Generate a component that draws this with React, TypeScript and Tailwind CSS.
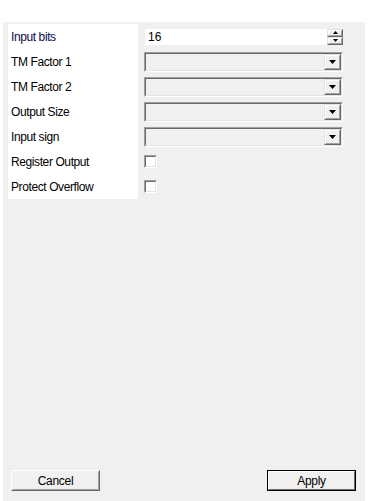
import React from "react";

const rows = [
  { label: "Input bits", kind: "spin" },
  { label: "TM Factor 1", kind: "combo" },
  { label: "TM Factor 2", kind: "combo" },
  { label: "Output Size", kind: "combo" },
  { label: "Input sign", kind: "combo" },
  { label: "Register Output", kind: "check" },
  { label: "Protect Overflow", kind: "check" },
];

function Arrow({ up, small }: { up?: boolean; small?: boolean }) {
  if (small) {
    return (
      <svg width="5" height="3" viewBox="0 0 5 3" className="block">
        {up ? <path d="M0 3h5L2.5 0z" fill="#000" /> : <path d="M0 0h5L2.5 3z" fill="#000" />}
      </svg>
    );
  }
  return (
    <svg width="7" height="4" viewBox="0 0 7 4" className="block">
      <path d="M0 0h7L3.5 4z" fill="#000" />
    </svg>
  );
}

function Raised({ children, className }: { children?: React.ReactNode; className?: string }) {
  return (
    <div className={"border border-t-[#e3e3e3] border-l-[#e3e3e3] border-b-[#696969] border-r-[#696969] " + (className ?? "")}>
      <div className="w-full h-full border border-t-white border-l-white border-b-[#a0a0a0] border-r-[#a0a0a0] bg-[#f0f0f0] flex items-center justify-center">
        {children}
      </div>
    </div>
  );
}

function Combo() {
  return (
    <div className="w-[199px] h-[20px] border border-t-[#a0a0a0] border-l-[#a0a0a0] border-b-white border-r-white">
      <div className="w-full h-full border border-t-[#696969] border-l-[#696969] border-b-[#e3e3e3] border-r-[#e3e3e3] bg-[#f0f0f0] flex justify-end">
        <Raised className="w-[17px] h-[16px]">
          <Arrow />
        </Raised>
      </div>
    </div>
  );
}

function Spin() {
  return (
    <div className="w-[198px] h-[16px] flex ml-[1px]">
      <div className="flex-1 bg-white text-[12px] leading-[16px] pl-[3px] text-black">16</div>
      <div className="w-[16px] flex flex-col">
        <Raised className="w-[16px] h-[8px]">
          <Arrow up small />
        </Raised>
        <Raised className="w-[16px] h-[8px]">
          <Arrow small />
        </Raised>
      </div>
    </div>
  );
}

function Check() {
  return (
    <div className="w-[13px] h-[13px] border border-t-[#a0a0a0] border-l-[#a0a0a0] border-b-white border-r-white">
      <div className="w-full h-full border border-t-[#696969] border-l-[#696969] border-b-[#e3e3e3] border-r-[#e3e3e3] bg-white" />
    </div>
  );
}

export default function App() {
  return (
    <div
      className="w-[368px] h-[501px] bg-white pt-[22px] pl-[3px] overflow-hidden"
      style={{ fontFamily: "'Liberation Sans', Arial, sans-serif" }}
    >
      <div className="w-[362px] h-[479px] bg-[#f0f0f0] flex flex-col">
        <div className="flex mt-[2px] ml-[5px]">
          <div className="w-[130px] bg-white flex flex-col">
            {rows.map((r, i) => (
              <div
                key={r.label}
                className={
                  "h-[25px] flex items-center pl-[3px] text-[12px] tracking-[-0.4px] " +
                  (i === 0 ? "text-[#0a0a50]" : "text-black")
                }
              >
                {r.label}
              </div>
            ))}
          </div>
          <div className="ml-[6px] flex flex-col">
            {rows.map((r) => (
              <div key={r.label} className="h-[25px] flex items-center">
                {r.kind === "spin" && <Spin />}
                {r.kind === "combo" && <Combo />}
                {r.kind === "check" && <Check />}
              </div>
            ))}
          </div>
        </div>
        <div className="flex-1" />
        <div className="flex justify-between pl-[8px] pr-[9px] mb-[10px]">
          <div className="w-[89px] h-[21px] border border-t-white border-l-white border-b-[#696969] border-r-[#696969]">
            <div className="w-full h-full border border-t-[#f0f0f0] border-l-[#f0f0f0] border-b-[#a0a0a0] border-r-[#a0a0a0] bg-[#f0f0f0] flex items-center justify-center text-[12px] tracking-[-0.3px] text-black">
              Cancel
            </div>
          </div>
          <div className="w-[89px] h-[21px] border border-black">
            <div className="w-full h-full border border-t-white border-l-white border-b-[#696969] border-r-[#696969] bg-[#f0f0f0] flex items-center justify-center text-[12px] tracking-[-0.3px] text-black">
              Apply
            </div>
          </div>
        </div>
      </div>
    </div>
  );
}
